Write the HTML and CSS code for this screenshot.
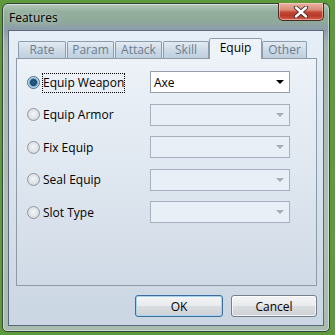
FILE: index.html
```html
<!DOCTYPE html>
<html>
<head>
<meta charset="utf-8">
<link rel="stylesheet" href="styles.css">
</head>
<body>
<div class="window">
  <div class="titlebar">
    <span class="title">Features</span>
    <div class="close">
      <svg width="16" height="12" viewBox="0 0 16 12">
        <path d="M3 1.5 L13 10.5 M13 1.5 L3 10.5" stroke="#3a2a28" stroke-width="4.2" stroke-linecap="round"/>
        <path d="M3 1.5 L13 10.5 M13 1.5 L3 10.5" stroke="#ffffff" stroke-width="2.4" stroke-linecap="round"/>
      </svg>
    </div>
  </div>
  <div class="client">
    <div class="tabs">
      <div class="tab t1">Rate</div>
      <div class="tab t2">Param</div>
      <div class="tab t3">Attack</div>
      <div class="tab t4">Skill</div>
      <div class="tab active">Equip</div>
      <div class="tab t6">Other</div>
    </div>
    <div class="panel">
      <div class="row">
        <span class="radio checked"></span>
        <span class="label"><span class="focus">Equip Weapon</span></span>
        <div class="combo enabled"><span class="val">Axe</span><span class="arrow"></span></div>
      </div>
      <div class="row">
        <span class="radio"></span>
        <span class="label">Equip Armor</span>
        <div class="combo"><span class="val"></span><span class="arrow"></span></div>
      </div>
      <div class="row">
        <span class="radio"></span>
        <span class="label">Fix Equip</span>
        <div class="combo"><span class="val"></span><span class="arrow"></span></div>
      </div>
      <div class="row">
        <span class="radio"></span>
        <span class="label">Seal Equip</span>
        <div class="combo"><span class="val"></span><span class="arrow"></span></div>
      </div>
      <div class="row">
        <span class="radio"></span>
        <span class="label">Slot Type</span>
        <div class="combo"><span class="val"></span><span class="arrow"></span></div>
      </div>
    </div>
    <div class="buttons">
      <div class="btn default">OK</div>
      <div class="btn">Cancel</div>
    </div>
  </div>
</div>
</body>
</html>
```
FILE: styles.css
```css
html, body {
  margin: 0;
  padding: 0;
}
body {
  width: 335px;
  height: 335px;
  overflow: hidden;
  background: #5e9a3c;
  font-family: "Open Sans", "Noto Sans", sans-serif;
  font-size: 12px;
}
.window {
  margin: 3px 0 0 2px;
  width: 328px;
  height: 329px;
  box-sizing: border-box;
  border: 1px solid #34443a;
  border-radius: 6px 6px 5px 5px;
  background: linear-gradient(180deg, #b4c8ba 0px, #93ae9d 8px, #8ea89a 18px, #8c9cae 26px, #a6b4ae 40px, #b0c0b6 200px, #a9bcb0 329px);
  padding: 0 5px 5px 5px;
  display: flex;
  flex-direction: column;
  box-shadow: inset 0 0 0 1px rgba(255,255,255,0.45);
}
.titlebar {
  height: 26px;
  display: flex;
  justify-content: space-between;
  align-items: flex-start;
}
.title {
  margin-top: 5px;
  margin-left: 1px;
  color: #000;
  font-size: 12px;
  text-shadow: 0 0 6px rgba(255,255,255,0.7);
}
.close {
  width: 44px;
  height: 17px;
  margin-top: -1px;
  margin-right: 0;
  border: 1px solid #4a2a24;
  border-top: none;
  border-radius: 0 0 5px 5px;
  background: linear-gradient(180deg, #e8b2a4 0%, #d98c78 40%, #c24632 55%, #b83a28 75%, #d0604a 100%);
  box-shadow: inset 0 0 0 1px rgba(255,220,210,0.5);
  display: flex;
  align-items: center;
  justify-content: center;
}
.client {
  flex: 1;
  border: 1px solid #5c6877;
  background: linear-gradient(180deg, #e6eef7 0%, #d9e3ee 50%, #cbd6e3 100%);
  padding: 7px 6px 0 7px;
  display: flex;
  flex-direction: column;
}
.tabs {
  display: flex;
  align-items: flex-end;
  height: 20px;
  padding-left: 2px;
  position: relative;
  z-index: 1;
}
.tab {
  height: 17px;
  box-sizing: border-box;
  border: 1px solid #8d9dae;
  border-bottom: none;
  border-radius: 2px 2px 0 0;
  background: linear-gradient(180deg, #e3ebf3 0%, #cfdce8 45%, #bfcfdf 100%);
  color: #6c7d8e;
  text-align: center;
  line-height: 16px;
  margin-right: 1px;
}
.t1 { width: 48px; }
.t2 { width: 47px; }
.t3 { width: 47px; }
.t4 { width: 46px; margin-right: 0; }
.tab.active {
  width: 53px;
  height: 21px;
  margin-bottom: -1px;
  background: #eef3f9;
  color: #000;
  line-height: 18px;
  margin-right: 0;
}
.t6 { width: 45px; }
.panel {
  height: 228px;
  box-sizing: border-box;
  border: 1px solid #8d9aa8;
  background: linear-gradient(180deg, #edf2f8 0%, #dfe7f0 50%, #d0dae6 100%);
  width: 301px;
  padding: 12px 0 0 10px;
  display: flex;
  flex-direction: column;
  gap: 10.5px;
}
.row {
  display: flex;
  align-items: center;
  height: 22px;
}
.radio {
  width: 13px;
  height: 13px;
  box-sizing: border-box;
  border-radius: 50%;
  border: 1px solid #8e979f;
  background: radial-gradient(circle at 50% 45%, #f4f6f8 0%, #dfe3e8 55%, #c8ced6 100%);
  margin-right: 3px;
  position: relative;
  flex: none;
}
.radio.checked {
  border-color: #4a6a86;
  background: radial-gradient(circle at 50% 50%, #2b5f86 0px, #1a4a72 3px, #6fa8cf 4px, #e4ecf3 5.5px);
}
.label {
  width: 107px;
  color: #000;
  flex: none;
}
.focus {
  border: 1px dotted #000;
  padding: 0 0 1px 0;
  margin-left: -1px;
}
.combo {
  width: 140px;
  height: 22px;
  box-sizing: border-box;
  border: 1px solid #a7b0bc;
  background: #e9eff7;
  display: flex;
  align-items: center;
  justify-content: space-between;
  padding: 0 5px 0 3px;
  flex: none;
}
.combo.enabled {
  background: #ffffff;
  border-color: #969fab;
}
.arrow {
  width: 0;
  height: 0;
  border-left: 4px solid transparent;
  border-right: 4px solid transparent;
  border-top: 4px solid #a8adb4;
}
.combo.enabled .arrow {
  border-top-color: #000;
}
.buttons {
  display: flex;
  justify-content: flex-end;
  gap: 8px;
  margin-top: 9px;
  width: 301px;
}
.btn {
  width: 86px;
  height: 22px;
  box-sizing: border-box;
  border: 1px solid #767f89;
  border-radius: 3px;
  background: linear-gradient(180deg, #f4f5f6 0%, #e8eaec 48%, #d9dcdf 52%, #ced2d6 100%);
  box-shadow: inset 0 0 0 1px rgba(255,255,255,0.7);
  display: flex;
  align-items: center;
  justify-content: center;
  color: #000;
}
.btn.default {
  width: 88px;
  border-color: #3c6e9c;
  box-shadow: inset 0 0 0 1px #a6d3ef;
}
```
